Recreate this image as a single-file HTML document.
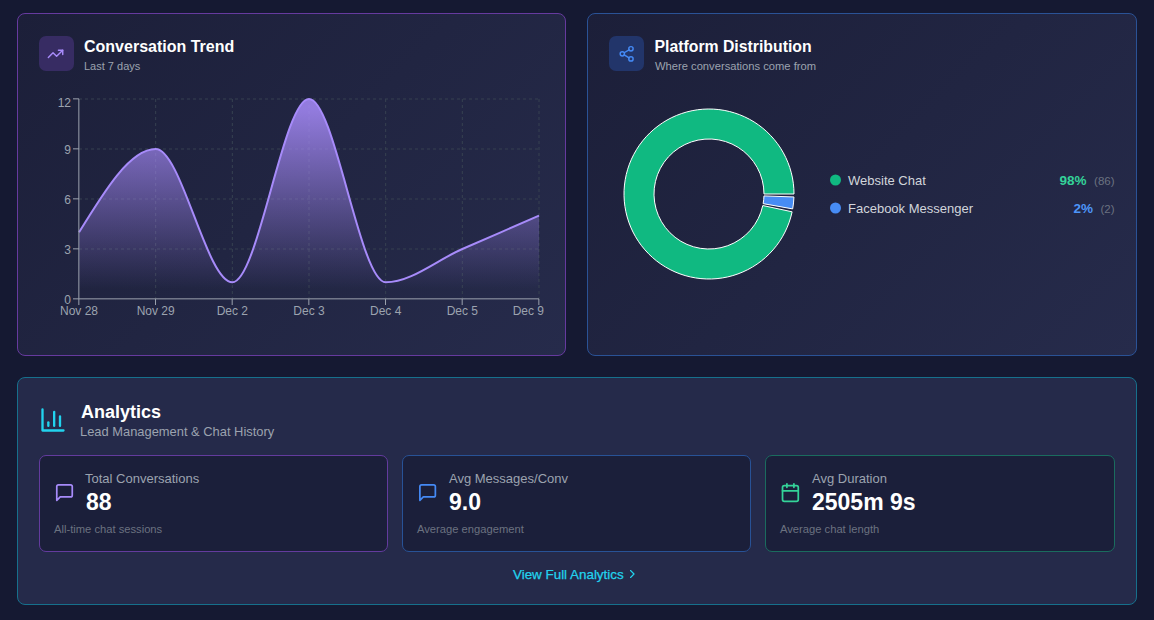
<!DOCTYPE html>
<html>
<head>
<meta charset="utf-8">
<style>
*{box-sizing:border-box;margin:0;padding:0}
html,body{width:1154px;height:620px;overflow:hidden}
body{background:#151932;font-family:"Liberation Sans",sans-serif;position:relative}
.card{position:absolute;border:1px solid;border-radius:8px;background:linear-gradient(135deg,#1c1f39 0%,#262b4b 100%)}
.t{position:absolute;white-space:nowrap;line-height:1}
.ib{position:absolute;width:35px;height:35px;border-radius:7px}
.stat{position:absolute;border:1px solid;border-radius:7px;background:#1b1f3a;top:455px;height:97px}
svg{position:absolute;left:0;top:0;overflow:visible}
</style>
</head>
<body>
<!-- Card 1 -->
<div class="card" style="left:17px;top:13px;width:549px;height:343px;border-color:#663a9f"></div>
<div class="ib" style="left:39px;top:36px;background:#372c63"></div>
<svg width="1154" height="620" viewBox="0 0 1154 620" style="width:1154px;height:620px">
  <!-- trend icon -->
  <g transform="translate(46.9,45.2) scale(0.72)" fill="none" stroke="#a78bfa" stroke-width="2" stroke-linecap="round" stroke-linejoin="round">
    <polyline points="22 7 13.5 15.5 8.5 10.5 2 17"/><polyline points="16 7 22 7 22 13"/>
  </g>
</svg>
<div class="t" style="left:84px;top:39px;font-size:16px;font-weight:700;color:#fff">Conversation Trend</div>
<div class="t" style="left:84px;top:61px;font-size:11px;color:#9ca3af">Last 7 days</div>

<!-- Card 2 -->
<div class="card" style="left:587px;top:13px;width:550px;height:343px;border-color:#2a5296"></div>
<div class="ib" style="left:609px;top:36px;background:#22356a"></div>
<div class="t" style="left:654.5px;top:39px;font-size:15.8px;font-weight:700;color:#fff">Platform Distribution</div>
<div class="t" style="left:655px;top:61px;font-size:11.2px;color:#9ca3af">Where conversations come from</div>

<!-- Analytics -->
<div class="card" style="left:17px;top:377px;width:1120px;height:228px;border-color:#16708c;background:#252a4a"></div>
<div class="t" style="left:81px;top:403px;font-size:18px;font-weight:700;color:#fff">Analytics</div>
<div class="t" style="left:80px;top:426px;font-size:12.9px;color:#9ca3af">Lead Management &amp; Chat History</div>

<div class="stat" style="left:39px;width:349px;border-color:#633b9e"></div>
<div class="stat" style="left:402px;width:349px;border-color:#285296"></div>
<div class="stat" style="left:765px;width:350px;border-color:#1a6c5e"></div>

<div class="t" style="left:85px;top:472px;font-size:13px;color:#9ca3af">Total Conversations</div>
<div class="t" style="left:86px;top:491px;font-size:23px;font-weight:700;color:#fff">88</div>
<div class="t" style="left:54px;top:524px;font-size:11.2px;color:#6b7280">All-time chat sessions</div>

<div class="t" style="left:449px;top:472px;font-size:13px;color:#9ca3af">Avg Messages/Conv</div>
<div class="t" style="left:449px;top:491px;font-size:23px;font-weight:700;color:#fff">9.0</div>
<div class="t" style="left:417px;top:524px;font-size:11.2px;color:#6b7280">Average engagement</div>

<div class="t" style="left:812px;top:472px;font-size:13px;color:#9ca3af">Avg Duration</div>
<div class="t" style="left:812px;top:491px;font-size:23px;font-weight:700;color:#fff">2505m 9s</div>
<div class="t" style="left:780px;top:524px;font-size:11.2px;color:#6b7280">Average chat length</div>

<div class="t" style="left:513px;top:568px;font-size:13.4px;color:#22d3ee;-webkit-text-stroke:0.25px #22d3ee">View Full Analytics</div>

<svg width="1154" height="620" viewBox="0 0 1154 620" style="width:1154px;height:620px">
  <defs>
    <linearGradient id="ag" x1="0" y1="0" x2="0" y2="1">
      <stop offset="5%" stop-color="#a78bfa" stop-opacity="0.85"/>
      <stop offset="95%" stop-color="#a78bfa" stop-opacity="0"/>
    </linearGradient>
  </defs>
  <!-- grid -->
  <g stroke="#374151" stroke-dasharray="3 3" stroke-width="1" fill="none">
    <line x1="79" y1="99" x2="539" y2="99"/>
    <line x1="79" y1="149" x2="539" y2="149"/>
    <line x1="79" y1="199" x2="539" y2="199"/>
    <line x1="79" y1="249" x2="539" y2="249"/>
    <line x1="155.67" y1="99" x2="155.67" y2="299"/>
    <line x1="232.33" y1="99" x2="232.33" y2="299"/>
    <line x1="309" y1="99" x2="309" y2="299"/>
    <line x1="385.67" y1="99" x2="385.67" y2="299"/>
    <line x1="462.33" y1="99" x2="462.33" y2="299"/>
    <line x1="539" y1="99" x2="539" y2="299"/>
  </g>
  <path d="M79.00,232.33C104.56,190.67,130.11,149.00,155.67,149.00C181.22,149.00,206.78,282.33,232.33,282.33C257.89,282.33,283.44,99.00,309.00,99.00C334.56,99.00,360.11,282.33,385.67,282.33C411.22,282.33,436.78,260.11,462.33,249.00C487.89,237.89,513.44,226.78,539.00,215.67L539,299L79,299Z" fill="url(#ag)" stroke="none"/>
  <path d="M79.00,232.33C104.56,190.67,130.11,149.00,155.67,149.00C181.22,149.00,206.78,282.33,232.33,282.33C257.89,282.33,283.44,99.00,309.00,99.00C334.56,99.00,360.11,282.33,385.67,282.33C411.22,282.33,436.78,260.11,462.33,249.00C487.89,237.89,513.44,226.78,539.00,215.67" fill="none" stroke="#a78bfa" stroke-width="2"/>
  <!-- axes -->
  <g stroke="#9ca3af" stroke-width="1" fill="none">
    <line x1="78.85" y1="99" x2="78.85" y2="299"/>
    <line x1="79" y1="298.85" x2="539" y2="298.85"/>
    <line x1="73" y1="98.85" x2="79" y2="98.85"/>
    <line x1="73" y1="148.85" x2="79" y2="148.85"/>
    <line x1="73" y1="198.85" x2="79" y2="198.85"/>
    <line x1="73" y1="248.85" x2="79" y2="248.85"/>
    <line x1="73" y1="298.85" x2="79" y2="298.85"/>
    <line x1="78.85" y1="299" x2="78.85" y2="305"/>
    <line x1="155.52" y1="299" x2="155.52" y2="305"/>
    <line x1="232.18" y1="299" x2="232.18" y2="305"/>
    <line x1="308.85" y1="299" x2="308.85" y2="305"/>
    <line x1="385.52" y1="299" x2="385.52" y2="305"/>
    <line x1="462.18" y1="299" x2="462.18" y2="305"/>
    <line x1="538.85" y1="299" x2="538.85" y2="305"/>
  </g>
  <g font-family="Liberation Sans" font-size="12" fill="#9ca3af">
    <text x="71" y="107" text-anchor="end">12</text>
    <text x="71" y="153.5" text-anchor="end">9</text>
    <text x="71" y="203.5" text-anchor="end">6</text>
    <text x="71" y="253.5" text-anchor="end">3</text>
    <text x="71" y="303.5" text-anchor="end">0</text>
    <text x="79" y="314.8" text-anchor="middle">Nov 28</text>
    <text x="155.67" y="314.8" text-anchor="middle">Nov 29</text>
    <text x="232.33" y="314.8" text-anchor="middle">Dec 2</text>
    <text x="309" y="314.8" text-anchor="middle">Dec 3</text>
    <text x="385.67" y="314.8" text-anchor="middle">Dec 4</text>
    <text x="462.33" y="314.8" text-anchor="middle">Dec 5</text>
    <text x="544" y="314.8" text-anchor="end">Dec 9</text>
  </g>

  <!-- pie -->
  <path d="M794.000,194.000A85,85,0,1,0,792.114,211.804L762.780,205.520A55,55,0,1,1,764.000,194.000Z" fill="#10b981" stroke="#fff" stroke-width="1"/>
  <path d="M792.685,208.893A85,85,0,0,0,793.948,196.966L763.966,195.919A55,55,0,0,1,763.149,203.637Z" fill="#478cf4" stroke="#fff" stroke-width="1"/>

  <!-- legend -->
  <circle cx="835.5" cy="180" r="5.5" fill="#10b981"/>
  <circle cx="835.5" cy="208" r="5.5" fill="#478cf4"/>
  <g font-family="Liberation Sans">
    <text x="848" y="185" font-size="13" fill="#d1d5db">Website Chat</text>
    <text x="848" y="213" font-size="13" fill="#d1d5db">Facebook Messenger</text>
    <text x="1086.5" y="185" font-size="13.5" font-weight="700" fill="#34d399" text-anchor="end">98%</text>
    <text x="1093" y="213" font-size="13.5" font-weight="700" fill="#4d95f8" text-anchor="end">2%</text>
    <text x="1114.5" y="185" font-size="11.5" fill="#6b7280" text-anchor="end">(86)</text>
    <text x="1114.5" y="213" font-size="11.5" fill="#6b7280" text-anchor="end">(2)</text>
  </g>

  <!-- share icon -->
  <g transform="translate(618,45.2) scale(0.72)" fill="none" stroke="#458af5" stroke-width="2" stroke-linecap="round" stroke-linejoin="round">
    <circle cx="18" cy="5" r="3"/><circle cx="6" cy="12" r="3"/><circle cx="18" cy="19" r="3"/>
    <line x1="8.59" y1="13.51" x2="15.42" y2="17.49"/><line x1="15.41" y1="6.51" x2="8.59" y2="10.49"/>
  </g>
  <!-- analytics icon -->
  <g transform="translate(39,406) scale(1.1667)" fill="none" stroke="#22d3ee" stroke-width="2" stroke-linecap="round" stroke-linejoin="round">
    <path d="M3 3v18h18"/><path d="M18 17V9"/><path d="M13 17V5"/><path d="M8 17v-3"/>
  </g>
  <!-- message icons -->
  <g transform="translate(54.2,482.3) scale(0.86)" fill="none" stroke="#a78bfa" stroke-width="2" stroke-linecap="round" stroke-linejoin="round">
    <path d="M21 15a2 2 0 0 1-2 2H7l-4 4V5a2 2 0 0 1 2-2h14a2 2 0 0 1 2 2z"/>
  </g>
  <g transform="translate(417.3,482.3) scale(0.86)" fill="none" stroke="#458af5" stroke-width="2" stroke-linecap="round" stroke-linejoin="round">
    <path d="M21 15a2 2 0 0 1-2 2H7l-4 4V5a2 2 0 0 1 2-2h14a2 2 0 0 1 2 2z"/>
  </g>
  <!-- calendar icon -->
  <g transform="translate(779.9,482) scale(0.875)" fill="none" stroke="#34d399" stroke-width="2" stroke-linecap="round" stroke-linejoin="round">
    <rect x="3" y="4" width="18" height="18" rx="2" ry="2"/><line x1="16" y1="2" x2="16" y2="6"/><line x1="8" y1="2" x2="8" y2="6"/><line x1="3" y1="10" x2="21" y2="10"/>
  </g>
  <!-- chevron -->
  <g transform="translate(625.3,567) scale(0.583)" fill="none" stroke="#22d3ee" stroke-width="2" stroke-linecap="round" stroke-linejoin="round">
    <path d="m9 18 6-6-6-6"/>
  </g>
</svg>
</body>
</html>
